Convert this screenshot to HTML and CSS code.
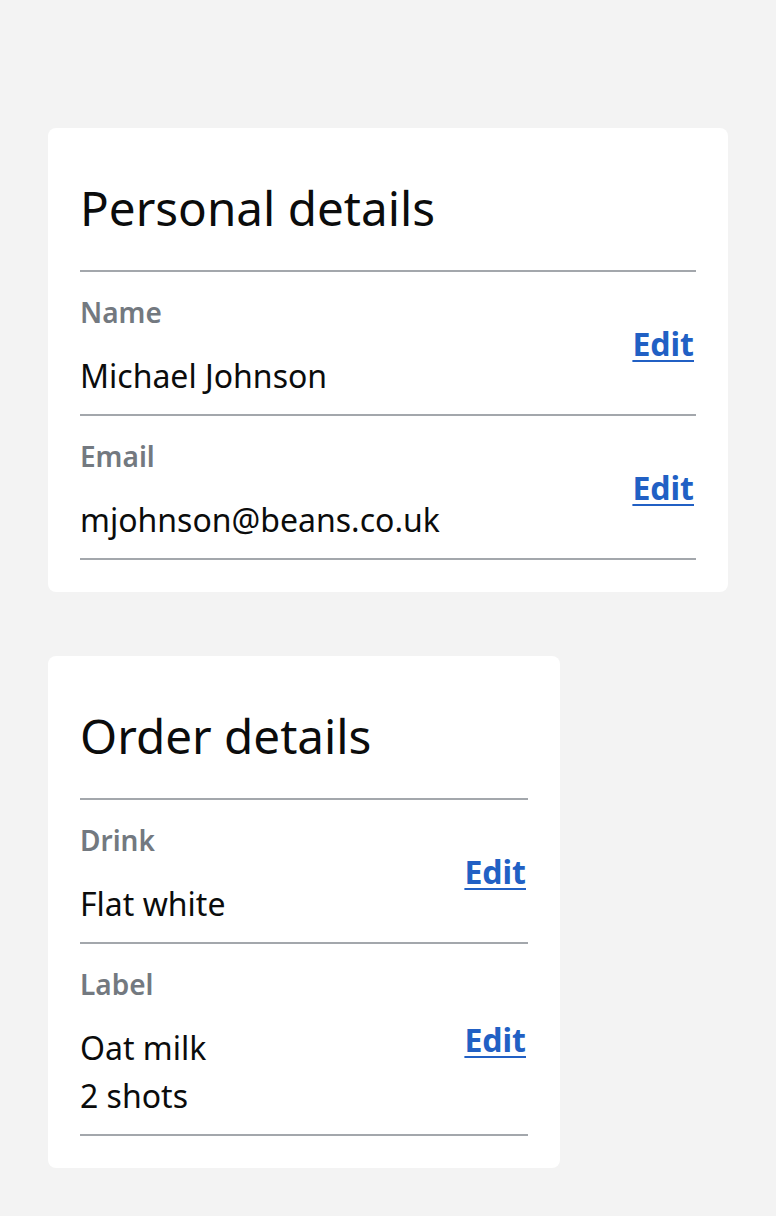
FILE: index.html
```html
<!DOCTYPE html>
<html lang="en">
<head>
<meta charset="utf-8">
<title>Details</title>
<link rel="stylesheet" href="styles.css">
</head>
<body>
<main class="page">
  <section class="card card-wide">
    <h2 class="card-title">Personal details</h2>
    <dl class="summary">
      <div class="row">
        <div class="row-body">
          <dt class="row-key">Name</dt>
          <dd class="row-value">Michael Johnson</dd>
        </div>
        <a class="row-action" href="#">Edit</a>
      </div>
      <div class="row">
        <div class="row-body">
          <dt class="row-key">Email</dt>
          <dd class="row-value">mjohnson@beans.co.uk</dd>
        </div>
        <a class="row-action" href="#">Edit</a>
      </div>
    </dl>
  </section>
  <section class="card card-narrow">
    <h2 class="card-title">Order details</h2>
    <dl class="summary">
      <div class="row">
        <div class="row-body">
          <dt class="row-key">Drink</dt>
          <dd class="row-value">Flat white</dd>
        </div>
        <a class="row-action" href="#">Edit</a>
      </div>
      <div class="row">
        <div class="row-body">
          <dt class="row-key">Label</dt>
          <dd class="row-value">Oat milk<br>2 shots</dd>
        </div>
        <a class="row-action" href="#">Edit</a>
      </div>
    </dl>
  </section>
</main>
</body>
</html>
```

FILE: styles.css
```css
html, body {
  margin: 0;
  padding: 0;
  background: #f3f3f3;
}
body {
  font-family: "Noto Sans", "Open Sans", sans-serif;
  color: #0b0c0c;
}
.page {
  display: flex;
  flex-direction: column;
  align-items: flex-start;
  gap: 64px;
  padding: 128px 48px 48px;
}
.card {
  background: #ffffff;
  border-radius: 8px;
  padding: 32px;
  box-sizing: border-box;
}
.card-wide {
  width: 680px;
}
.card-narrow {
  width: 512px;
}
.card-title {
  margin: 18px 0 32px;
  font-size: 47.6px;
  line-height: 60px;
  font-weight: 400;
  color: #0b0c0c;
}
.summary {
  margin: 0;
  border-top: 2px solid #a3a7ac;
}
.row {
  display: flex;
  align-items: center;
  justify-content: space-between;
  border-bottom: 2px solid #a3a7ac;
  padding: 16px 2px 14px 0;
}
.row-key {
  font-size: 28px;
  line-height: 48px;
  font-weight: 600;
  color: #737980;
}
.row-value {
  margin: 16px 0 0;
  font-size: 32px;
  line-height: 48px;
  color: #0b0c0c;
}
.row-action {
  font-size: 32px;
  line-height: 48px;
  font-weight: 700;
  color: #2160c4;
  text-decoration: underline;
  text-decoration-thickness: 2px;
  text-underline-offset: 4px;
}
```
